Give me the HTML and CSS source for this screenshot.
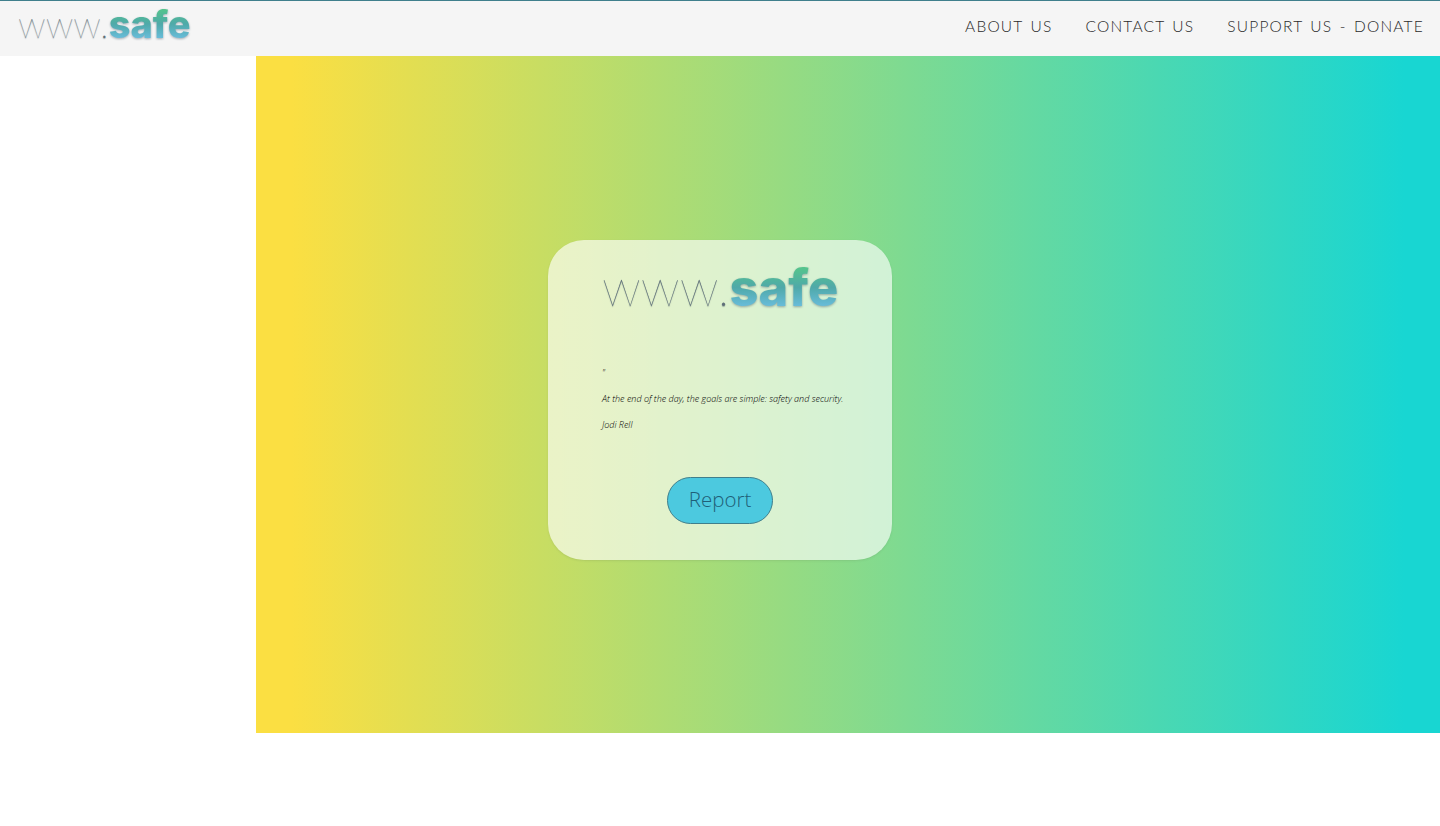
FILE: index.html
```html
<!DOCTYPE html>
<html>
<head>
	<title>www.safe</title>
	<link rel="stylesheet" href="styles.css">
</head>
<body>
	<header class="topbar">
		<a class="logo logo-small" href="#"><span class="logo-www">www.</span><span class="logo-safe">safe</span></a>
		<nav class="nav">
			<a href="#">ABOUT US</a>
			<a href="#">CONTACT US</a>
			<a href="#">SUPPORT US - DONATE</a>
		</nav>
	</header>

	<main class="hero">
		<section class="card">
			<div class="logo logo-large"><span class="logo-www">www.</span><span class="logo-safe">safe</span></div>
			<div class="quote">
				<p>"</p>
				<p>At the end of the day, the goals are simple: safety and security.</p>
				<p>Jodi Rell</p>
			</div>
			<button type="button" class="report">Report</button>
		</section>
	</main>
</body>
</html>
```

FILE: styles.css
```css
body {
	margin: 0;
	background-color: #fff;
	font-family: "Open Sans", sans-serif;
}

.topbar {
	height: 49px;
	border-top: 1px solid #3f7f8c;
	background-color: #f5f5f5;
	display: flex;
	align-items: center;
	justify-content: space-between;
	padding: 0 16px 6px 18px;
}

.logo {
	display: block;
	text-decoration: none;
	white-space: nowrap;
	line-height: 1;
}
.logo-www {
	font-family: Lato, sans-serif;
	font-weight: 100;
	color: #5f7079;
	text-shadow: 0 1px 1px rgba(70, 90, 100, .45);
}
.logo-safe {
	font-family: Inter, sans-serif;
	font-weight: 800;
	background: linear-gradient(180deg, #56c987 12%, #4fa9a9 50%, #6cbfe0 85%);
	-webkit-background-clip: text;
	background-clip: text;
	color: transparent;
	filter: drop-shadow(0 1px 1px rgba(50, 80, 100, .45));
}
.logo-small {
	font-size: 37px;
	margin-bottom: 3px;
}
.logo-small .logo-safe {
	font-size: 38px;
}
.logo-large {
	font-size: 52px;
	text-align: center;
}
.logo-large .logo-safe {
	font-size: 50.5px;
}

.nav {
	display: flex;
	gap: 33px;
}
.nav a {
	font-family: Lato, sans-serif;
	font-weight: 300;
	font-size: 15.5px;
	letter-spacing: 1.2px;
	word-spacing: 2px;
	color: #2a2a2a;
	text-decoration: none;
}

.hero {
	height: 677px;
	margin-left: 256px;
	padding: 184px 256px 0 0;
	box-sizing: border-box;
	background: linear-gradient(90deg, #fbdf42 3%, #18d6d2 97%);
	display: flex;
	justify-content: center;
	align-items: flex-start;
}

.card {
	width: 344px;
	height: 320px;
	box-sizing: border-box;
	padding: 20px 54px 0;
	border-radius: 36px;
	background-color: rgba(255, 255, 255, .64);
	box-shadow: 0 1px 2px rgba(90, 110, 80, .15);
	display: flex;
	flex-direction: column;
}

.quote {
	margin-top: 53px;
	font-size: 9px;
	font-style: italic;
	font-weight: 300;
	color: #000;
	line-height: 12px;
}
.quote p {
	margin: 0 0 14px;
	white-space: nowrap;
}

.report {
	align-self: center;
	margin-top: 32px;
	width: 106px;
	height: 47px;
	padding-bottom: 3px;
	border: 1px solid #3f7f8c;
	border-radius: 24px;
	background-color: #4cc9df;
	color: #1f5f78;
	font-family: "Open Sans", sans-serif;
	font-size: 20.5px;
	font-weight: 300;
	cursor: pointer;
}
```
